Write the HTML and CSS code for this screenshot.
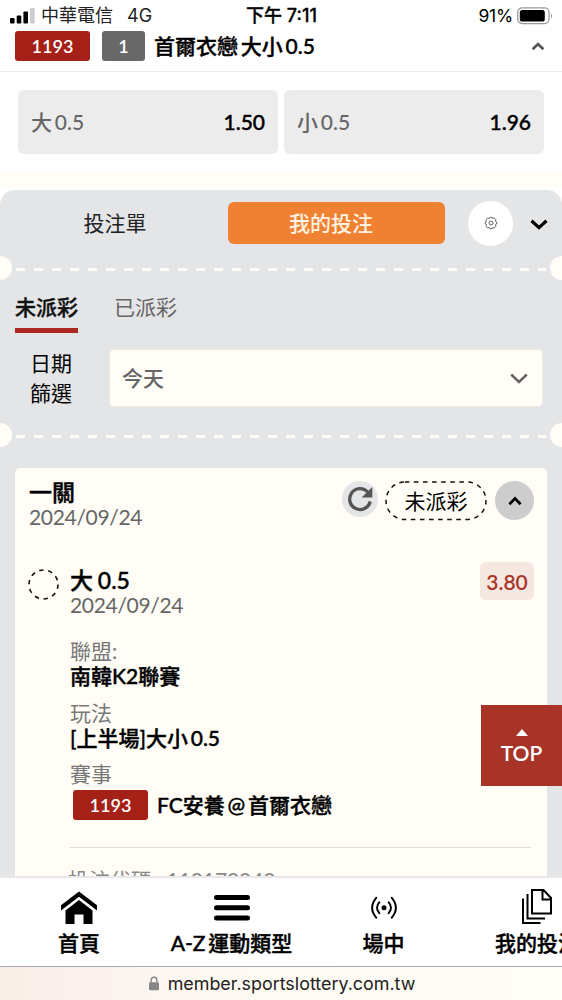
FILE: index.html
```html
<!DOCTYPE html>
<html lang="zh-Hant">
<head>
<meta charset="utf-8">
<title>我的投注</title>
<link rel="stylesheet" href="styles.css">
</head>
<body>
<div class="screen">
  <header class="status">
    <div class="carrier">
      <svg width="25" height="16" viewBox="0 0 25 16"><rect x="0" y="10" width="4.6" height="5.5" rx="1"/><rect x="6.7" y="7.5" width="4.6" height="8" rx="1"/><rect x="13.4" y="3.5" width="4.6" height="12" rx="1"/><rect x="20.1" y="0" width="4.6" height="15.5" rx="1" fill="#ccc"/></svg>
      <span class="carrier-name">中華電信</span><span class="net">4G</span>
    </div>
    <div class="clock">下午 7:11</div>
    <div class="battery"><span>91%</span>
      <svg width="36" height="18" viewBox="0 0 36 18"><rect x=".7" y=".9" width="31.4" height="15.7" rx="4.5" fill="none" stroke="#999" stroke-width="1.2"/><rect x="2.8" y="3" width="25" height="11.5" rx="2.6"/><path d="M34 6.2q2 2.6 0 5.2z" fill="#999"/></svg>
    </div>
  </header>

  <section class="match">
    <span class="tag">1193</span><span class="tag tag-gray">1</span><b class="title">首爾衣戀 大小 0.5</b>
    <svg class="match-arrow" width="14" height="9" viewBox="0 0 14 9"><path d="M1.6 7.2 7 2l5.4 5.2" fill="none" stroke="#555" stroke-width="2.7"/></svg>
  </section>
  <section class="odds">
    <div class="odd"><span>大 0.5</span><b>1.50</b></div>
    <div class="odd"><span>小 0.5</span><b>1.96</b></div>
  </section>
  <div class="band"></div>

  <main class="panel">
    <div class="switch">
      <span class="slip">投注單</span>
      <span class="mine">我的投注</span>
      <span class="gear"><svg width="14" height="14" viewBox="0 0 14 14" fill="none" stroke="#555" stroke-width=".9" stroke-linejoin="round"><path d="M5.900 1.300H8.100L8.600 2.500 10.300 2 11.900 3.700 11.400 5.300 12.700 6V8L11.400 8.700 11.900 10.300 10.300 12 8.600 11.500 8.100 12.700H5.900L5.400 11.500 3.700 12 2.100 10.300 2.600 8.700 1.300 8V6L2.600 5.300 2.100 3.700 3.700 2 5.400 2.500Z"/><circle cx="7" cy="7" r="2"/></svg></span>
      <svg class="chev" width="18" height="11" viewBox="0 0 18 11"><path d="M1.500 1.800 9 8.700l7.500-6.900" fill="none" stroke="#000" stroke-width="3.200"/></svg>
    </div>
    <div class="perf"><i></i><svg width="532" height="3"><path d="M1 1.500H531" stroke="#fffdf5" stroke-width="3" stroke-dasharray="9 9"/></svg><i></i></div>
    <nav class="tabs"><b>未派彩</b><span>已派彩</span></nav>
    <div class="filter">
      <div class="filter-label">日期<br>篩選</div>
      <div class="select"><span>今天</span><svg width="18" height="11" viewBox="0 0 18 11"><path d="M1.200 1.500 9 9l7.800-7.500" fill="none" stroke="#666" stroke-width="2.500"/></svg></div>
    </div>
    <div class="perf second"><i></i><svg width="532" height="3"><path d="M1 1.500H531" stroke="#fffdf5" stroke-width="3" stroke-dasharray="9 9"/></svg><i></i></div>

    <article class="card">
      <div class="card-head">
        <div class="stage"><b>一關</b><span class="date">2024/09/24</span></div>
        <span class="refresh"><svg width="26" height="26" viewBox="0 0 26 26"><path d="M20.700 6A10.400 10.400 0 1 0 23.200 15.500" fill="none" stroke="#555" stroke-width="3.300"/><path d="M25.300 1v10.600H14.700z" fill="#555"/></svg></span>
        <span class="pill"><svg width="102" height="40"><rect x="1" y="1" width="100" height="37.500" rx="18.750" fill="none" stroke="#111" stroke-width="1.500" stroke-dasharray="4.600 4.500"/></svg><span>未派彩</span></span>
        <span class="fold"><svg width="14" height="10" viewBox="0 0 14 10"><path d="M1.400 8.300 7 2.500l5.600 5.800" fill="none" stroke="#000" stroke-width="2.700"/></svg></span>
      </div>
      <div class="bet">
        <svg class="ring" width="31" height="31"><circle cx="15.500" cy="15.500" r="14.500" fill="none" stroke="#111" stroke-width="1.600" stroke-dasharray="4.400 4.680"/></svg>
        <div class="bet-body">
          <div class="pick"><div class="pick-text"><b>大 0.5</b><span class="date">2024/09/24</span></div><span class="rate">3.80</span></div>
          <dl>
            <dt>聯盟:</dt><dd>南韓K2聯賽</dd>
            <dt>玩法</dt><dd>[上半場]大小 0.5</dd>
            <dt>賽事</dt><dd class="event"><span class="tag">1193</span><span>FC安養 @ 首爾衣戀</span></dd>
          </dl>
          <div class="code"><span>投注代碼</span><span>110170040</span></div>
        </div>
      </div>
    </article>
    <div class="top"><svg width="12" height="7"><path d="M6 0l6 7H0z" fill="#fff"/></svg><span>TOP</span></div>
  </main>

  <footer class="nav">
    <div class="item home"><svg width="36" height="33" viewBox="0 0 36 33"><path d="M18 .5 36.200 14.300v5.300L18 5.700-.2 19.600v-5.300z"/><path d="M18 9 31.500 19.500V33H22.500V23.500H13.500V33h-9V19.500z"/></svg><span>首頁</span></div>
    <div class="item sports"><svg width="36" height="33" viewBox="0 0 36 33"><path d="M2.500 6.500h31M2.500 16.800h31M2.500 27h31" stroke="#000" stroke-width="5" stroke-linecap="round"/></svg><span>A-Z 運動類型</span></div>
    <div class="item live"><svg width="30" height="33" viewBox="0 0 30 33" fill="none" stroke="#000" stroke-width="1.900"><path d="M7.800 6.200Q-1.600 16.800 7.800 27.400M22.200 6.200q9.400 10.600 0 21.200M10.800 10.700q-5.600 6.100 0 12.200M19.200 10.700q5.600 6.100 0 12.200"/><circle cx="15" cy="16.800" r="2.500" fill="#000" stroke="none"/></svg><span>場中</span></div>
    <div class="item bets"><svg width="32" height="36" viewBox="0 0 32 36" fill="none" stroke="#000" stroke-width="2"><path d="M11 1h11.500L30 9v15.500H11zM21.500 1v9.500H30M6.500 5v24.500H24M2 9.500V34h17.500"/></svg><span>我的投注</span></div>
  </footer>
  <div class="url"><svg width="10" height="15" viewBox="0 0 10 15"><path d="M2.200 6.500V4a2.800 2.800 0 0 1 5.600 0v2.500" fill="none" stroke="#888" stroke-width="1.400"/><rect y="6.200" width="10" height="8" rx="1.300" fill="#888"/></svg><span>member.sportslottery.com.tw</span></div>
</div>
</body>
</html>
```
FILE: styles.css
```css
* { box-sizing: border-box; }
body { margin: 0; background: #fff; }
svg { display: block; flex: none; }
.screen { width: 562px; height: 1000px; overflow: hidden; display: flex; flex-direction: column; position: relative; font: 21px/30px Lato, "Noto Sans CJK TC", sans-serif; color: #000; white-space: nowrap; word-spacing: -2.5px; }
.screen > * { flex: none; }
b, dd, .item { font-weight: 500; -webkit-text-stroke: .4px currentColor; }
.item svg { -webkit-text-stroke: 0; }

.status { height: 31px; display: grid; grid-template-columns: 1fr auto 1fr; padding: 0 9px 0 10px; font: 18px/31px Inter, "Noto Sans CJK TC", sans-serif; word-spacing: 0; }
.carrier { display: flex; align-items: center; color: #222; }
.carrier-name { margin-left: 6px; }
.net { margin-left: 14px; }
.clock { font-weight: 500; font-size: 18px; -webkit-text-stroke: .3px currentColor; }
.battery { display: flex; justify-content: flex-end; align-items: center; font-size: 17.500px; letter-spacing: -.2px; }
.battery svg { margin-left: 4px; }

.match { height: 41px; padding: 0 17px 10px 15px; display: flex; align-items: center; border-bottom: 1px solid #ececec; }
.tag { width: 75px; height: 30px; border-radius: 3px; background: #a52017; color: #fff; font-size: 18px; font-weight: 600; line-height: 31px; text-align: center; letter-spacing: .1px; -webkit-text-stroke: 0; }
.tag-gray { width: 43px; margin-left: 12px; background: #686868; }
.title { margin-left: 9px; }
.match-arrow { margin-left: auto; }
.odds { display: flex; gap: 6px; padding: 18px 18px; height: 100px; }
.odd { width: 260px; height: 64px; border-radius: 6px; background: #ececec; padding: 0 13px; display: flex; justify-content: space-between; align-items: center; color: #666; font-weight: 500; }
.odd b { color: #000; }
.band { height: 15px; background: #fffdf5; margin-bottom: 3px; }

.panel { height: 686px; background: #e4e5e7; border-radius: 15px 15px 0 0; position: relative; overflow: hidden; }
.switch { height: 66px; display: flex; align-items: center; padding-right: 14px; }
.slip { width: 228px; padding-left: 2px; text-align: center; color: #222; }
.mine { width: 217px; height: 42px; border-radius: 6px; background: #ef8132; color: #fff3e4; font-weight: 500; line-height: 42px; padding-left: 61px; }
.gear { width: 45px; height: 45px; margin-left: 23px; border-radius: 50%; background: #fff; display: grid; place-items: center; }
.chev { margin-left: auto; margin-top: 3px; }
.perf { height: 24px; display: flex; align-items: center; justify-content: space-between; }
.perf i { width: 12px; height: 24px; flex: none; border-radius: 0 12px 12px 0; background: #fffdf5; }
.perf i:last-child { border-radius: 12px 0 0 12px; }
.perf svg { margin-top: 3px; }
.tabs { height: 53px; padding: 9px 15px 0; display: flex; gap: 36px; color: #666; }
.tabs b { height: 44px; padding-top: 3px; color: #111; border-bottom: 5px solid #ac2722; }
.tabs span { padding-top: 3px; }
.filter { height: 90px; padding: 16px 19px 0 0; display: flex; }
.filter-label { width: 109px; padding-left: 30px; margin-top: -1px; }
.select { flex: 1; height: 58px; border: 1px solid #efecdf; border-radius: 5px; background: #fffdf5; color: #666; padding: 0 14px 0 12px; display: flex; align-items: center; justify-content: space-between; font-weight: 500; }
.card { height: 440px; margin: 21px 15px 0; background: #fffdf5; border-radius: 5px 5px 0 0; padding: 13px 13px 0 14px; }
.card-head { height: 88px; display: flex; align-items: flex-start; }
.stage { width: 313px; margin-top: -1px; display: flex; flex-direction: column; }
.stage b, .pick b { font-size: 23px; line-height: 24px; word-spacing: -1px; }
.date { line-height: 26px; color: #666; letter-spacing: -.33px; }
.refresh { width: 36px; height: 36px; border-radius: 50%; background: #e4e5e7; display: grid; place-items: center; }
.pill { width: 102px; height: 40px; margin-left: 7px; display: grid; place-items: center; }
.pill > * { grid-area: 1 / 1; }
.fold { width: 39px; height: 39px; margin-left: 8px; border-radius: 50%; background: #cdcdcd; display: grid; place-items: center; }
.bet { display: flex; }
.ring { margin: 0 11px 0 -1px; }
.bet-body { flex: 1; }
.pick { height: 68px; display: flex; justify-content: space-between; }
.pick-text { display: flex; flex-direction: column; margin-top: -1px; }
.rate { width: 54px; height: 38px; margin-top: -7px; border-radius: 6px; background: #f4e8e0; color: #aa3628; font-weight: 600; line-height: 39px; text-align: center; }
dl { margin: 0; height: 211px; border-bottom: 1.500px solid #dedbd4; margin-right: 3px; }
dt { line-height: 27px; height: 26px; color: #777; }
dd { margin: 0; height: 35.500px; line-height: 26px; }
.event { display: flex; align-items: center; gap: 9px; padding: 2px 0 0 3px; }
.code { display: flex; gap: 15px; margin: 17px 0 0 -2px; color: #888; letter-spacing: -.1px; }
.top { position: absolute; right: 0; top: 515px; width: 81px; height: 81px; background: #a83327; color: #fff; display: flex; flex-direction: column; align-items: center; padding-top: 24px; font-weight: 600; line-height: 34px; }

.nav { height: 91px; border-top: 2px solid #e8e8ea; border-bottom: 1px solid #aaa; position: relative; background: #fff; display: flex; }
.item { flex: none; display: flex; flex-direction: column; align-items: center; padding-top: 13px; }
.item span { margin-top: 4px; }
.home { width: 158px; }
.sports { width: 147px; }
.live { width: 157px; }
.bets { width: 150px; padding-top: 11px; }
.bets span { margin-top: 3px; }
.url { flex: 1 !important; background: linear-gradient(90deg, #faede8, #fffbf4 45%, #fffdf6); display: flex; justify-content: center; align-items: center; gap: 9px; padding-left: 2px; font: 17.900px/30px Inter, sans-serif; color: #222; }
```
